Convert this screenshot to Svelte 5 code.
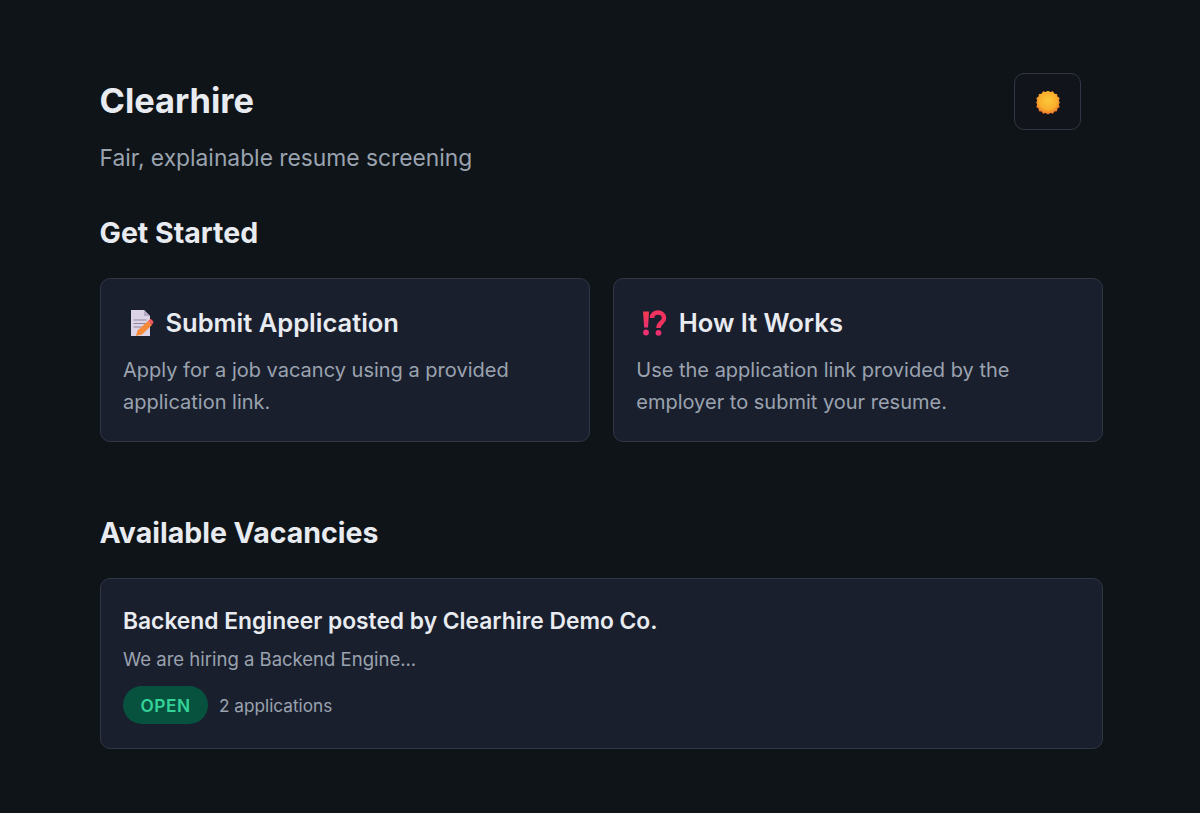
<script>
  const cards = [
    {
      icon: "memo",
      title: "Submit Application",
      text: "Apply for a job vacancy using a provided application link.",
    },
    {
      icon: "interrobang",
      title: "How It Works",
      text: "Use the application link provided by the employer to submit your resume.",
    },
  ];
</script>

<main class="page">
  <header class="top">
    <div>
      <h1>Clearhire</h1>
      <p class="tagline">Fair, explainable resume screening</p>
    </div>
    <button class="theme" aria-label="Toggle theme">
      <svg width="26" height="26" viewBox="0 0 24 24">
        <defs>
          <radialGradient id="sun" cx="50%" cy="42%" r="58%">
            <stop offset="0" stop-color="#fcc83a" />
            <stop offset="0.65" stop-color="#f9ae2c" />
            <stop offset="1" stop-color="#e8702c" />
          </radialGradient>
        </defs>
        <path
          fill="url(#sun)"
          d="M12 1.500l2.200 1.300 2.400-.7 1.300 2.200 2.500.2.300 2.500 2.100 1.400-.8 2.400 1 1.700-1 1.700.8 2.400-2.100 1.400-.3 2.500-2.500.2-1.300 2.200-2.400-.7-2.200 1.300-2.200-1.300-2.400.7-1.300-2.200-2.500-.2-.3-2.500-2.100-1.400.8-2.400-1-1.700 1-1.700-.8-2.400 2.100-1.400.3-2.500 2.500-.2 1.300-2.200 2.400.7z"
        />
      </svg>
    </button>
  </header>

  <section class="started">
    <h2>Get Started</h2>
    <div class="grid">
      {#each cards as card}
        <div class="card">
          <h3>
            {#if card.icon === "memo"}
              <svg class="emoji" width="26" height="28" viewBox="0 0 26 28">
                <path fill="#dcd3e6" d="M3 1h13l6 6v20H3z" />
                <path fill="#b5aac6" d="M16 1l6 6h-6z" />
                <path stroke="#8f869c" stroke-width="1.200" d="M5.500 11h13M5.500 14.500h13M5.500 18h8" />
                <path fill="#f58a3a" d="M8 27l1.500-5.500L20 12l4 4-10 9.500z" />
                <path fill="#ef5a5f" d="M20 12l1.500-1.500a1.500 1.500 0 0 1 2 0l1.500 1.500a1.500 1.500 0 0 1 0 2L24 16z" />
              </svg>
            {:else}
              <svg class="emoji" width="26" height="28" viewBox="0 0 26 28">
                <defs>
                  <linearGradient id="bang" x1="0" y1="0" x2="0" y2="1">
                    <stop offset="0" stop-color="#f23a4e" />
                    <stop offset="1" stop-color="#ee2f72" />
                  </linearGradient>
                </defs>
                <path fill="url(#bang)" d="M2 2.500h6l-1 16H3.200z" />
                <circle cx="5" cy="23.500" r="2.900" fill="#ee2f72" />
                <path
                  fill="none"
                  stroke="#f0325f"
                  stroke-width="4.500"
                  d="M11 9c0-7.500 12-7 12 0 0 5-5.500 4.500-5.500 10"
                />
                <circle cx="17.500" cy="23.800" r="2.900" fill="#ee2f72" />
              </svg>
            {/if}
            <span>{card.title}</span>
          </h3>
          <p>{card.text}</p>
        </div>
      {/each}
    </div>
  </section>

  <section class="vacancies">
    <h2>Available Vacancies</h2>
    <div class="card job">
      <h4>Backend Engineer posted by Clearhire Demo Co.</h4>
      <p>We are hiring a Backend Engine...</p>
      <div class="meta">
        <span class="badge">OPEN</span>
        <span class="count">2 applications</span>
      </div>
    </div>
  </section>
</main>

<style>
  :global(body) {
    background: #0f1419;
    font-family: Inter, "Noto Sans", sans-serif;
  }

  .page {
    box-sizing: border-box;
    width: 1200px;
    height: 813px;
    padding: 77px 97px 0 99.500px;
    color: #e8ebf0;
  }

  .top {
    display: flex;
    justify-content: space-between;
    align-items: flex-start;
  }

  h1 {
    margin: 0;
    font-size: 34.400px;
    line-height: 47px;
    font-weight: 650;
  }

  .tagline {
    margin: 19px 0 0;
    font-size: 22.800px;
    line-height: 30px;
    color: #9aa3af;
  }

  .theme {
    width: 67px;
    height: 57px;
    margin: -4px 22px 0 0;
    display: flex;
    align-items: center;
    justify-content: center;
    background: #11151b;
    border: 1px solid #303643;
    border-radius: 10px;
    padding: 0;
  }

  h2 {
    margin: 0;
    font-size: 28.500px;
    line-height: 36px;
    font-weight: 650;
  }

  .started {
    margin-top: 42px;
  }

  .grid {
    display: grid;
    grid-template-columns: 1fr 1fr;
    gap: 23px;
    margin-top: 27px;
  }

  .card {
    box-sizing: border-box;
    background: #1a1f2e;
    border: 1px solid #303643;
    border-radius: 10px;
    padding: 23px 22.500px;
  }

  .grid .card {
    height: 164px;
  }

  h3 {
    display: flex;
    align-items: center;
    gap: 11.500px;
    margin: 0;
    font-size: 25.500px;
    line-height: 42px;
    font-weight: 600;
    padding-left: 5px;
  }

  .emoji {
    flex: none;
  }

  .card p {
    margin: 10px 0 0;
    font-size: 20px;
    line-height: 32px;
    color: #9aa3af;
  }

  .vacancies {
    margin-top: 73px;
  }

  .job {
    margin-top: 27px;
    height: 170.500px;
  }

  h4 {
    margin: 0;
    font-size: 22.800px;
    line-height: 38px;
    font-weight: 600;
  }

  .job p {
    margin: 5px 0 0;
    font-size: 18.500px;
    line-height: 28px;
  }

  .meta {
    display: flex;
    align-items: center;
    gap: 11px;
    margin-top: 13px;
  }

  .badge {
    box-sizing: border-box;
    width: 85px;
    height: 38px;
    display: flex;
    align-items: center;
    justify-content: center;
    border-radius: 19px;
    background: #06523f;
    color: #34d399;
    font-size: 17.300px;
    font-weight: 600;
    letter-spacing: 0.5px;
  }

  .count {
    font-size: 17.200px;
    color: #9aa3af;
  }
</style>
